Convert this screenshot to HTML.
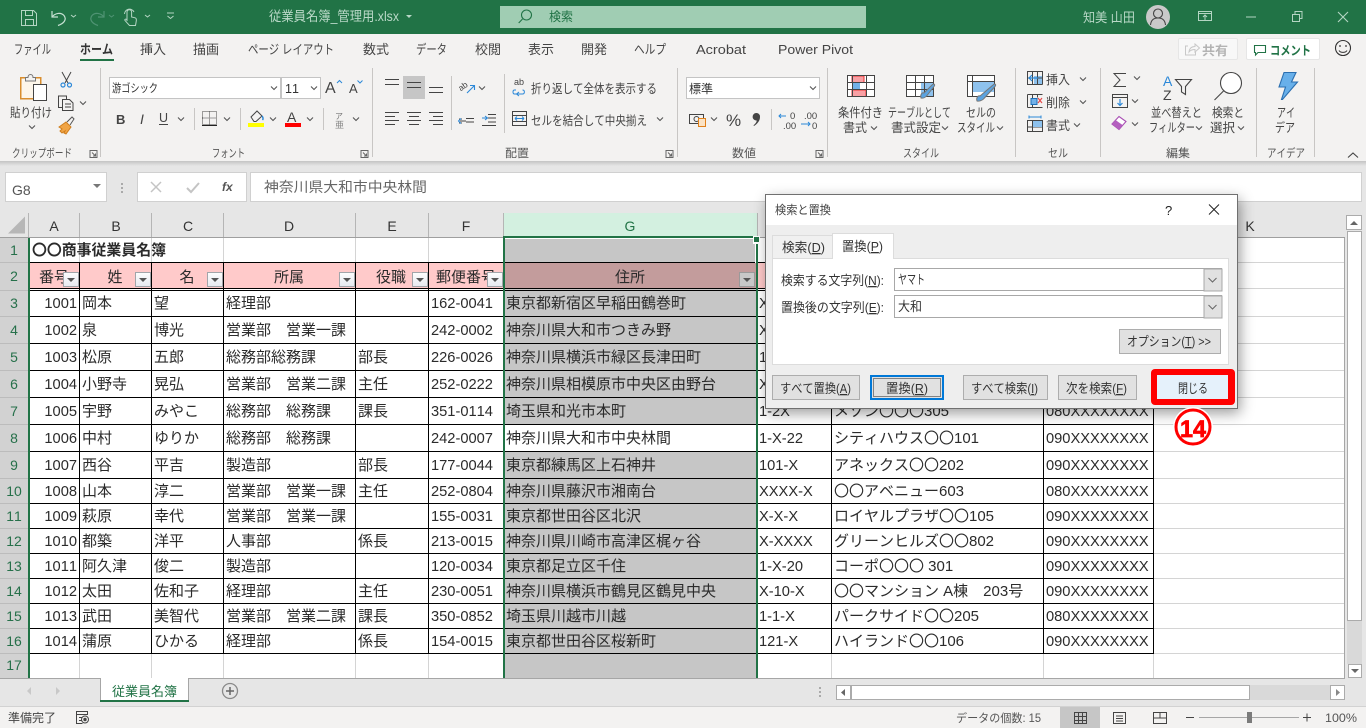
<!DOCTYPE html>
<html lang="ja"><head><meta charset="utf-8"><title>従業員名簿_管理用.xlsx - Excel</title>
<style>
html,body{margin:0;padding:0;width:1366px;height:728px;overflow:hidden;background:#e6e6e6}
svg{display:block;position:absolute;left:0;top:0}
text{font-family:"Liberation Sans","Noto Sans CJK JP",sans-serif;white-space:pre;font-kerning:none}
rect{shape-rendering:crispEdges}
rect.rr{shape-rendering:auto}
.t{font-size:12.5px;fill:#444}
.l{font-size:11.5px;fill:#555}
.tab{font-size:13px;fill:#444}
.c{font-size:15px;fill:#2b2b2b}
.p{font-size:14.67px;fill:#2b2b2b}
.e{text-anchor:end}
.m{text-anchor:middle}
.h{font-size:14px;fill:#333;text-anchor:middle}
.n{font-size:14px;fill:#26704a;text-anchor:middle}
.d{font-size:13px;fill:#333}
.i{fill:none;stroke:#444;stroke-width:1}
.w{fill:none;stroke:#b4d5c3;stroke-width:1}
.ch{fill:none;stroke:#555;stroke-width:1.1}
.s{fill:#c8c6c4}
</style></head><body>
<svg width="1366" height="728" viewBox="0 0 1366 728" xmlns="http://www.w3.org/2000/svg">
<defs>
<path id="v" d="M-3-1.5 0 1.5 3-1.5" class="ch"/>
<linearGradient id="sh" x1="0" y1="0" x2="0" y2="1"><stop offset="0" stop-color="#c4c4c4"/><stop offset="1" stop-color="#e6e6e6"/></linearGradient>
<linearGradient id="fb" x1="0" y1="0" x2="0" y2="1"><stop offset="0" stop-color="#fdfdfd"/><stop offset="1" stop-color="#e6e9ef"/></linearGradient>
<g id="fbtn"><rect x="0.5" y="0.5" width="15" height="14" fill="url(#fb)" stroke="#a2a5aa"/><path d="M4 6h8l-4 4z" fill="#555"/></g>
</defs>

<!-- title bar -->
<rect x="0" y="0" width="1366" height="34" fill="#217346"/>
<path class="w" d="M21.5 10.5h12l3 3v12h-15zM25.500 10.500v5h7v-5M25.500 25.500v-6h8v6"/>
<path d="M52 11v6h6M52 17c3-4 9-5 12-1.500 3 4 0 8-6 10" fill="none" stroke="#c6e0d2" stroke-width="1.200"/>
<path d="M71 15l2.500 2 2.500-2" class="w"/>
<path d="M104 11v6h-6M104 17c-3-4-9-5-12-1.500-3 4 0 8 6 10" fill="none" stroke="#4f9373" stroke-width="1.200"/>
<path d="M109 15l2.500 2 2.500-2" fill="none" stroke="#4f9373"/>
<path class="w" d="M127 21v-9a2.300 2.300 0 0 1 4.600 0v5l3.500.8c1.500.4 1.400 1.500 1.200 3l-.8 4.700h-6l-4.500-5c-.8-1.200.8-2 2-.5M124.500 14a5 5 0 0 1 9.500-2"/>
<path d="M145 15l2.500 2 2.500-2" class="w"/>
<path d="M167 13h7M167.500 16l3 2.500 3-2.500" class="w"/>
<text x="269" y="21" font-size="13.5" fill="#b9d8c7" textLength="130" lengthAdjust="spacingAndGlyphs">従業員名簿_管理用.xlsx</text>
<path d="M406 15h6l-3 3z" fill="#b9d8c7"/>
<rect x="500" y="6" width="366" height="22" fill="#a0cdb3"/>
<circle cx="526.500" cy="15" r="5" fill="none" stroke="#217346" stroke-width="1.100"/><path d="M522.500 19l-3.800 4" stroke="#217346" fill="none" stroke-width="1.100"/>
<text x="549" y="21" font-size="12.500" fill="#217346" textLength="24" lengthAdjust="spacingAndGlyphs">検索</text>
<text x="1083" y="22" font-size="13" fill="#b9d8c7" textLength="52" lengthAdjust="spacingAndGlyphs">知美 山田</text>
<circle cx="1158" cy="17" r="12" fill="#c9c9c9"/>
<circle cx="1158" cy="13.500" r="4.500" fill="none" stroke="#444" stroke-width="1.100"/><path d="M1150.500 25c.5-5.500 3.500-7 7.500-7s7 1.500 7.500 7" fill="none" stroke="#444" stroke-width="1.100"/>
<path class="w" d="M1198.500 11.500h13v9h-13zM1198.500 13.500h13M1205 20v-4.500M1203 17l2-2 2 2"/>
<path class="w" d="M1246 17h10"/>
<path class="w" d="M1292.500 14.500h7v7h-7zM1295 14v-2.500h7v7h-2.500"/>
<path class="w" d="M1338 12l10 10M1348 12l-10 10" style="stroke-width:1.100"/>

<!-- ribbon -->
<rect x="0" y="34" width="1366" height="127" fill="#f3f2f1"/>
<rect x="0" y="161" width="1366" height="5" fill="url(#sh)"/>
<text class="tab" x="14" y="54" textLength="37" lengthAdjust="spacingAndGlyphs">ファイル</text>
<text class="tab" x="80" y="54" textLength="33" lengthAdjust="spacingAndGlyphs" font-weight="700" style="fill:#333">ホーム</text>
<rect x="80" y="59" width="34" height="2" fill="#217346"/>
<text class="tab" x="140" y="54" textLength="26" lengthAdjust="spacingAndGlyphs">挿入</text>
<text class="tab" x="193" y="54" textLength="26" lengthAdjust="spacingAndGlyphs">描画</text>
<text class="tab" x="248" y="54" textLength="86" lengthAdjust="spacingAndGlyphs">ページ レイアウト</text>
<text class="tab" x="363" y="54" textLength="26" lengthAdjust="spacingAndGlyphs">数式</text>
<text class="tab" x="416" y="54" textLength="31" lengthAdjust="spacingAndGlyphs">データ</text>
<text class="tab" x="475" y="54" textLength="26" lengthAdjust="spacingAndGlyphs">校閲</text>
<text class="tab" x="528" y="54" textLength="26" lengthAdjust="spacingAndGlyphs">表示</text>
<text class="tab" x="581" y="54" textLength="26" lengthAdjust="spacingAndGlyphs">開発</text>
<text class="tab" x="634" y="54" textLength="32" lengthAdjust="spacingAndGlyphs">ヘルプ</text>
<text class="tab" x="696" y="54" textLength="50" lengthAdjust="spacingAndGlyphs">Acrobat</text>
<text class="tab" x="778" y="54" textLength="75" lengthAdjust="spacingAndGlyphs">Power Pivot</text>

<rect class="rr" x="1178.500" y="38.500" width="59" height="21" rx="1.500" fill="#f8f8f8" stroke="#e6e6e6"/>
<path d="M1188 46h-2.500v9h10v-3M1189 52c.5-4 3-5.500 6-5.500v-2.500l4.500 4-4.500 4v-2.500c-2.500 0-4.500.5-6 2.500z" fill="none" stroke="#c8c8c8"/>
<text x="1202" y="55" font-size="12.500" font-weight="700" fill="#b3b3b3" textLength="26" lengthAdjust="spacingAndGlyphs">共有</text>
<rect class="rr" x="1246.500" y="38.500" width="73" height="21" rx="1.500" fill="#fff" stroke="#e6e6e6"/>
<path d="M1254.500 45.500h11v7h-7.500l-2.500 2.500v-2.500h-1z" fill="none" stroke="#217346" stroke-width="1.100"/>
<text x="1270" y="55" font-size="12.500" font-weight="700" fill="#217346" textLength="41" lengthAdjust="spacingAndGlyphs">コメント</text>
<circle cx="1343" cy="48" r="7.500" fill="none" stroke="#333" stroke-width="1.100"/><circle cx="1340" cy="46" r=".9" fill="#333"/><circle cx="1346" cy="46" r=".9" fill="#333"/><path d="M1339 50.500c1.500 2.500 6.500 2.500 8 0" fill="none" stroke="#333"/>

<!-- group separators -->
<rect class="s" x="100" y="68" width="1" height="89"/><rect class="s" x="372" y="68" width="1" height="89"/><rect class="s" x="677" y="68" width="1" height="89"/><rect class="s" x="827" y="68" width="1" height="89"/><rect class="s" x="1015" y="68" width="1" height="89"/><rect class="s" x="1100" y="68" width="1" height="89"/><rect class="s" x="1256" y="68" width="1" height="89"/><rect class="s" x="1314" y="68" width="1" height="89"/>
<rect class="s" x="194" y="108" width="1" height="22"/><rect class="s" x="240" y="108" width="1" height="22"/><rect class="s" x="323" y="108" width="1" height="22"/>
<rect class="s" x="451" y="76" width="1" height="54"/><rect class="s" x="504" y="74" width="1" height="59"/><rect class="s" x="771" y="109" width="1" height="21"/>

<!-- clipboard group -->
<rect x="20.500" y="77.500" width="20" height="21" fill="#fdf6ea" stroke="#d98e2e" stroke-width="1.500"/>
<path d="M25.500 81v-3.500h2.500c0-4 5-4 5 0h2.500v3.500z" fill="#f3f2f1" stroke="#777"/>
<rect x="33.500" y="84.500" width="13" height="16" fill="#fff" stroke="#444"/>
<text class="t" x="10" y="117" textLength="42" lengthAdjust="spacingAndGlyphs">貼り付け</text>
<use href="#v" x="32" y="127"/>
<path d="M62 72l6 11M71 72l-6 11" fill="none" stroke="#444"/><circle cx="63" cy="85" r="2" fill="none" stroke="#2b88d8" stroke-width="1.200"/><circle cx="69.500" cy="85" r="2" fill="none" stroke="#2b88d8" stroke-width="1.200"/>
<path class="i" d="M62 107.500h-3.500v-11.500h8v3M62.500 99.500h7l3.500 3.500v7.500h-10.500zM65 104h6M65 107h6"/>
<use href="#v" x="83" y="103"/>
<path d="M59 127l7-5 5 5-5 7-2-1 1-2-3 2-2-2 2-2z" fill="#f0a445" stroke="#d07e1d"/><path d="M67 122l5-5 2 2-4 6" fill="none" stroke="#555"/>
<text class="l" x="12" y="157" textLength="60" lengthAdjust="spacingAndGlyphs">クリップボード</text>
<path d="M90 150.500h7v7h-7zM92 152.500l3.500 3.500M95.500 153.500v2.500h-2.500" fill="none" stroke="#666"/>

<!-- font group -->
<rect x="109.500" y="77.500" width="171" height="21" fill="#fff" stroke="#c4c4c4"/>
<rect x="281.500" y="77.500" width="39" height="21" fill="#fff" stroke="#c4c4c4"/>
<text x="112" y="92" font-size="11.500" fill="#333" textLength="46" lengthAdjust="spacingAndGlyphs">游ゴシック</text>
<use href="#v" x="274" y="88"/>
<text x="285" y="93" font-size="12.500" fill="#333">11</text>
<use href="#v" x="314" y="88"/>
<text x="325" y="93" font-size="16" fill="#444">A</text><path d="M337 83l2.500-2.500 2.500 2.500" fill="none" stroke="#2b88d8"/>
<text x="349" y="93" font-size="13" fill="#444">A</text><path d="M357.500 80.500l2.500 2.500 2.500-2.500" fill="none" stroke="#2b88d8"/>
<text x="116" y="124" font-size="13" font-weight="700" fill="#444">B</text>
<text x="140" y="124" font-size="14" font-style="italic" fill="#444" font-family="Liberation Serif">I</text>
<text x="159" y="122" font-size="12.500" fill="#444">U</text><rect x="159" y="124" width="9" height="1" fill="#444"/>
<use href="#v" x="181" y="119"/>
<path d="M202.500 111.500h14v13h-14zM209.500 111.500v13M202.500 118h14" fill="none" stroke="#444" stroke-dasharray="1 1"/><rect x="202" y="125" width="15" height="1" fill="#222"/>
<use href="#v" x="227" y="119"/>
<path d="M251 117l6-6 5 5-6 5.500h-2z" fill="none" stroke="#444"/><path d="M262 116c1 1 1.500 3 .5 4" fill="none" stroke="#2b88d8" stroke-width="1.500"/><rect x="248" y="123" width="16" height="4" fill="#ff0"/>
<use href="#v" x="273" y="119"/>
<text x="287" y="122" font-size="14" fill="#444">A</text><rect x="285" y="123" width="16" height="4" fill="#f00"/>
<use href="#v" x="310" y="119"/>
<text x="335" y="119" font-size="8" fill="#777">ア</text><text x="335" y="128" font-size="9" fill="#888">亜</text>
<use href="#v" x="356" y="119"/>
<text class="l" x="212" y="157" textLength="33" lengthAdjust="spacingAndGlyphs">フォント</text>
<path d="M361 150.500h7v7h-7zM363 152.500l3.500 3.500M366.500 153.500v2.500h-2.500" fill="none" stroke="#666"/>

<!-- align group -->
<rect x="403" y="76" width="22" height="23" fill="#c6c6c6"/>
<path class="i" d="M385 79.500h14M385 84.500h14M407 82.500h14M407 87.500h14M429 87.500h14M429 92.500h14M385 112.500h14M385 116.500h10M385 120.500h14M385 124.500h10M407 112.500h14M409 116.500h10M407 120.500h14M409 124.500h10M429 112.500h14M433 116.500h10M429 120.500h14M433 124.500h10"/>
<text x="459" y="90" font-size="8.500" fill="#444" transform="rotate(-35 462 88)">ab</text><path d="M467 93l7-7M470 85.500h4.500v4.500" fill="none" stroke="#2b88d8" stroke-width="1.100"/>
<use href="#v" x="482" y="88"/>
<path d="M466 118.500h8M466 122h8M459 119h3M459 123h3M460 121h6" fill="none" stroke="#444"/><path d="M461 118.500l-2.500 2.500 2.500 2.500" fill="none" stroke="#2b88d8"/>
<path d="M488 114.500h8M488 118h8M488 122h8M482 125.500h14" fill="none" stroke="#444"/><path d="M482 118h5M485 116l2.500 2-2.500 2" fill="none" stroke="#2b88d8"/>
<text x="514" y="85" font-size="9" fill="#444">ab</text><path d="M516 90h-1.500c-2 0-2 4 0 4h8c2.500 0 2.500-4 0-4M519 92l-2.500 2 2.500 2" fill="none" stroke="#2b88d8"/>
<text class="t" x="531" y="93" textLength="126" lengthAdjust="spacingAndGlyphs">折り返して全体を表示する</text>
<path d="M512.500 111.500h14v14h-14zM512.500 115.500h14M512.500 121.500h14" fill="none" stroke="#444"/><path d="M515 118.500h9M515 118.500l2-2M515 118.500l2 2M524 118.500l-2-2M524 118.500l-2 2" fill="none" stroke="#2b88d8"/>
<text class="t" x="531" y="125" textLength="116" lengthAdjust="spacingAndGlyphs">セルを結合して中央揃え</text>
<use href="#v" x="660" y="119"/>
<text class="l" x="505" y="157" textLength="24" lengthAdjust="spacingAndGlyphs">配置</text>
<path d="M666 150.500h7v7h-7zM668 152.500l3.500 3.500M671.500 153.500v2.500h-2.500" fill="none" stroke="#666"/>

<!-- number group -->
<rect x="686.500" y="77.500" width="133" height="21" fill="#fff" stroke="#c4c4c4"/>
<text x="689" y="93" font-size="12" fill="#333" textLength="24" lengthAdjust="spacingAndGlyphs">標準</text>
<use href="#v" x="813" y="88"/>
<path class="i" d="M689.500 114.500h14v9h-14z"/><circle cx="696.500" cy="119" r="2.500" class="i"/>
<rect x="698.500" y="118.500" width="7" height="8" fill="#fbe3c5" stroke="#e0801a"/>
<use href="#v" x="714" y="119"/>
<text x="726" y="126" font-size="17" fill="#444">%</text>
<path d="M756 113a3.600 3.600 0 0 1 4 4c0 4-3 7-6 9l-.5-.8c2-1.500 3.200-3 3.200-4.700a3.600 3.600 0 0 1-.7-7.500z" fill="#444"/>
<text x="790" y="119" font-size="9.500" fill="#444">0</text><text x="783" y="129" font-size="9.500" fill="#444">.00</text><path d="M786 116h-7M781 114l-2 2 2 2" fill="none" stroke="#2b88d8"/>
<text x="804" y="119" font-size="9.500" fill="#444">.00</text><text x="812" y="129" font-size="9.500" fill="#444">0</text><path d="M801 124h9M808 122l2 2-2 2" fill="none" stroke="#2b88d8"/>
<text class="l" x="732" y="157" textLength="24" lengthAdjust="spacingAndGlyphs">数値</text>
<path d="M816 150.500h7v7h-7zM818 152.500l3.500 3.500M821.500 153.500v2.500h-2.500" fill="none" stroke="#666"/>

<!-- styles -->
<rect x="848" y="75.500" width="27" height="21" fill="#fff"/>
<rect x="852" y="76" width="12" height="6.500" fill="#f8a0a4" stroke="#e33"/><rect x="852" y="83" width="8" height="6.500" fill="#72b1e8"/><rect x="852" y="90" width="14" height="6.500" fill="#f8a0a4" stroke="#e33"/>
<path class="i" d="M847.500 75.500h27v21h-27zM847.500 82.500h27M847.500 89.500h27M852.500 75.500v21M866.500 75.500v21"/>
<text class="t" x="838" y="117" textLength="45" lengthAdjust="spacingAndGlyphs">条件付き</text>
<text class="t" x="843" y="132" textLength="24" lengthAdjust="spacingAndGlyphs">書式</text><use href="#v" x="874" y="128"/>
<rect x="906" y="75.500" width="27" height="21" fill="#fff"/><rect x="921" y="82" width="12" height="14" fill="#8ec2ee"/>
<path class="i" d="M906.500 75.500h27v21h-27zM906.500 82.500h27M906.500 89.500h27M915.500 75.500v21M924.500 75.500v21"/>
<path d="M921 98c-1-3 1-6 3-5l8-8c2-2 3.500-.5 2 1.500l-7 9c-1.500 2-4 3-6 2.500z" fill="#5ba3e0" stroke="#777"/>
<text class="t" x="888" y="117" textLength="63" lengthAdjust="spacingAndGlyphs">テーブルとして</text>
<text class="t" x="891" y="132" textLength="50" lengthAdjust="spacingAndGlyphs">書式設定</text><use href="#v" x="945" y="128"/>
<rect x="967" y="75.500" width="27" height="21" fill="#fff"/><rect x="972" y="81" width="22" height="11" fill="#8ec2ee"/>
<path class="i" d="M967.500 75.500h27v21h-27zM967.500 81.500h27M972.500 75.500v21"/>
<path d="M977 101c-1-3 1-6 3-5l13-11c2-2 3.500-.5 2 1.500l-11 12c-1.500 2-5 3-7 2.500z" fill="#5ba3e0" stroke="#777"/>
<text class="t" x="966" y="117" textLength="30" lengthAdjust="spacingAndGlyphs">セルの</text>
<text class="t" x="957" y="132" textLength="38" lengthAdjust="spacingAndGlyphs">スタイル</text><use href="#v" x="1000" y="128"/>
<text class="l" x="903" y="157" textLength="36" lengthAdjust="spacingAndGlyphs">スタイル</text>

<!-- cells -->
<rect x="1034" y="76" width="9" height="8" fill="#8ec2ee"/>
<path class="i" d="M1027.500 71.500h15v13h-15zM1027.500 78h15M1032.500 71.500v13M1037.500 71.500v13" stroke-dasharray="2 0"/>
<path d="M1038 78h-9M1032 75l-3 3 3 3" fill="none" stroke="#2b88d8" stroke-width="1.200"/>
<text class="t" x="1046" y="84" textLength="24" lengthAdjust="spacingAndGlyphs">挿入</text><use href="#v" x="1083" y="79"/>
<path class="i" d="M1027.500 94.500h15M1027.500 107.500h15M1032.500 94.500v13M1037.500 94.500v3M1027.500 94.500v13"/>
<rect x="1031" y="98.500" width="6" height="6" fill="#72b1e8" stroke="#1e6fb8"/><path d="M1038 98l4 5M1042 98l-4 5" stroke="#e84a4a" fill="none" stroke-width="1.200"/>
<text class="t" x="1046" y="107" textLength="24" lengthAdjust="spacingAndGlyphs">削除</text><use href="#v" x="1083" y="102"/>
<path d="M1029 117h12M1029 115.500v3M1041 115.500v3" stroke="#2b88d8" fill="none"/>
<path class="i" d="M1027.500 120.500h15v11h-15zM1032.500 120.500v11M1027.500 127h15"/><rect x="1033" y="121" width="9" height="6" fill="#8ec2ee"/>
<text class="t" x="1046" y="130" textLength="24" lengthAdjust="spacingAndGlyphs">書式</text><use href="#v" x="1077" y="125"/>
<text class="l" x="1048" y="157" textLength="20" lengthAdjust="spacingAndGlyphs">セル</text>

<!-- editing -->
<path d="M1126 73.500h-12l6 6.500-6 6.500h12" fill="none" stroke="#444"/><use href="#v" x="1137" y="78"/>
<path class="i" d="M1112.500 94.500h15v13h-15zM1112.500 97.500h15"/><path d="M1120 99v6M1117.500 103l2.500 2.500 2.500-2.500" fill="none" stroke="#2b88d8" stroke-width="1.200"/><use href="#v" x="1135" y="101"/>
<path d="M1112 124l7-7.500 7 5-7 8z" fill="#fff" stroke="#a94fb4" stroke-width="1.100"/><path d="M1112 124l3.500-4 7 5-3.500 4.500z" fill="#b45fbf"/><use href="#v" x="1135" y="124"/>
<text x="1163" y="86" font-size="14" fill="#2b88d8">A</text><text x="1163" y="100" font-size="14" fill="#444">Z</text>
<path d="M1175.500 79.500h16l-6 7v8l-4-2.500v-5.500z" fill="none" stroke="#444" stroke-width="1.100"/>
<text class="t" x="1151" y="117" textLength="51" lengthAdjust="spacingAndGlyphs">並べ替えと</text>
<text class="t" x="1149" y="132" textLength="46" lengthAdjust="spacingAndGlyphs">フィルター</text><use href="#v" x="1199" y="128"/>
<circle cx="1231" cy="83" r="10.500" fill="#fff" stroke="#444" stroke-width="1.100"/><path d="M1223.500 91l-9 9" stroke="#444" fill="none" stroke-width="1.100"/>
<text class="t" x="1212" y="117" textLength="32" lengthAdjust="spacingAndGlyphs">検索と</text>
<text class="t" x="1210" y="132" textLength="25" lengthAdjust="spacingAndGlyphs">選択</text><use href="#v" x="1241" y="128"/>
<text class="l" x="1166" y="157" textLength="24" lengthAdjust="spacingAndGlyphs">編集</text>

<!-- ideas -->
<path d="M1284 72.500h12l-4.500 9.500h6l-15 17.500-1 0 4-12.500h-6.500z" fill="#68b0ea" stroke="#2b6fb0" stroke-width="1.100"/>
<text class="t" x="1277" y="117" textLength="18" lengthAdjust="spacingAndGlyphs">アイ</text>
<text class="t" x="1275" y="132" textLength="20" lengthAdjust="spacingAndGlyphs">デア</text>
<text class="l" x="1267" y="157" textLength="38" lengthAdjust="spacingAndGlyphs">アイデア</text>
<path d="M1348 157.500l5-4.500 5 4.500" fill="none" stroke="#444" stroke-width="1.100"/>

<!-- formula bar -->
<rect x="5.500" y="172.500" width="101" height="29" fill="#fff" stroke="#d0d0d0"/>
<text x="12" y="195" font-size="14" fill="#555">G8</text>
<path d="M93 184h8l-4 4z" fill="#777"/>
<rect x="121" y="183" width="2" height="2" fill="#aaa"/><rect x="121" y="187" width="2" height="2" fill="#aaa"/><rect x="121" y="191" width="2" height="2" fill="#aaa"/>
<rect x="137.500" y="172.500" width="109" height="29" fill="#fff" stroke="#d0d0d0"/>
<path d="M151 182l10 10M161 182l-10 10" stroke="#c4c4c4" stroke-width="1.500" fill="none"/>
<path d="M187 188l4 4 8-9" stroke="#c4c4c4" stroke-width="2" fill="none"/>
<text x="222" y="191" font-size="12" font-style="italic" font-weight="700" fill="#555" font-family="Liberation Serif">fx</text>
<rect x="250.500" y="172.500" width="1111" height="29" fill="#fff" stroke="#d0d0d0"/>
<text x="264" y="192" font-size="14" fill="#666" textLength="163" lengthAdjust="spacingAndGlyphs">神奈川県大和市中央林間</text>

<!-- column headers -->
<rect x="0" y="213" width="1346" height="25" fill="#e6e6e6"/>
<path d="M8 233.500h17v-17z" fill="#b7b7b7"/>
<rect x="503" y="213" width="254" height="24" fill="#d3f0e0"/>
<rect x="28" y="213" width="1" height="24" fill="#b5b5b5"/><rect x="79" y="213" width="1" height="24" fill="#b5b5b5"/><rect x="151" y="213" width="1" height="24" fill="#b5b5b5"/><rect x="223" y="213" width="1" height="24" fill="#b5b5b5"/><rect x="355" y="213" width="1" height="24" fill="#b5b5b5"/><rect x="428" y="213" width="1" height="24" fill="#b5b5b5"/><rect x="503" y="213" width="1" height="24" fill="#b5b5b5"/><rect x="757" y="213" width="1" height="24" fill="#b5b5b5"/>
<rect x="0" y="237" width="1345" height="1" fill="#9f9f9f"/>
<text class="h" x="54" y="231">A</text><text class="h" x="116" y="231">B</text><text class="h" x="188" y="231">C</text><text class="h" x="289" y="231">D</text><text class="h" x="392" y="231">E</text><text class="h" x="466" y="231">F</text><text class="h" x="630" y="231" style="fill:#217346">G</text><text class="h" x="1250" y="231">K</text>

<!-- row headers -->
<rect x="0" y="238" width="28" height="440" fill="#d2d2d2"/>
<rect x="0" y="262" width="28" height="1" fill="#bcbcbc"/><rect x="0" y="290" width="28" height="1" fill="#bcbcbc"/><rect x="0" y="316" width="28" height="1" fill="#bcbcbc"/><rect x="0" y="343" width="28" height="1" fill="#bcbcbc"/><rect x="0" y="370" width="28" height="1" fill="#bcbcbc"/><rect x="0" y="397" width="28" height="1" fill="#bcbcbc"/><rect x="0" y="424" width="28" height="1" fill="#bcbcbc"/><rect x="0" y="451" width="28" height="1" fill="#bcbcbc"/><rect x="0" y="478" width="28" height="1" fill="#bcbcbc"/><rect x="0" y="503" width="28" height="1" fill="#bcbcbc"/><rect x="0" y="528" width="28" height="1" fill="#bcbcbc"/><rect x="0" y="553" width="28" height="1" fill="#bcbcbc"/><rect x="0" y="578" width="28" height="1" fill="#bcbcbc"/><rect x="0" y="603" width="28" height="1" fill="#bcbcbc"/><rect x="0" y="628" width="28" height="1" fill="#bcbcbc"/><rect x="0" y="653" width="28" height="1" fill="#bcbcbc"/>
<text class="n" x="14" y="255">1</text><text class="n" x="14" y="281">2</text><text class="n" x="14" y="308">3</text><text class="n" x="14" y="335">4</text><text class="n" x="14" y="362">5</text><text class="n" x="14" y="389">6</text><text class="n" x="14" y="416">7</text><text class="n" x="14" y="443">8</text><text class="n" x="14" y="470">9</text><text class="n" x="14" y="496">10</text><text class="n" x="14" y="521">11</text><text class="n" x="14" y="546">12</text><text class="n" x="14" y="571">13</text><text class="n" x="14" y="596">14</text><text class="n" x="14" y="621">15</text><text class="n" x="14" y="646">16</text><text class="n" x="14" y="670">17</text>

<!-- sheet -->
<rect x="29" y="238" width="1316" height="440" fill="#fff"/>
<rect x="1344" y="238" width="1" height="440" fill="#a6a6a6"/>
<rect x="29" y="263" width="1124" height="26" fill="#ffcaca"/>
<rect x="505" y="238" width="251" height="440" fill="#c6c6c6"/>
<rect x="505" y="263" width="251" height="26" fill="#c39c9c"/>
<rect x="505" y="425" width="251" height="26" fill="#fff"/>

<!-- light grid -->
<g fill="#d4d4d4">
<rect x="79" y="238" width="1" height="25"/><rect x="151" y="238" width="1" height="25"/><rect x="223" y="238" width="1" height="25"/><rect x="355" y="238" width="1" height="25"/><rect x="428" y="238" width="1" height="25"/><rect x="757" y="238" width="1" height="25"/><rect x="831" y="238" width="1" height="25"/>
<rect x="79" y="654" width="1" height="24"/><rect x="151" y="654" width="1" height="24"/><rect x="223" y="654" width="1" height="24"/><rect x="355" y="654" width="1" height="24"/><rect x="428" y="654" width="1" height="24"/><rect x="831" y="654" width="1" height="24"/><rect x="1043" y="654" width="1" height="24"/><rect x="1153" y="238" width="1" height="440"/>
<rect x="1154" y="262" width="190" height="1"/><rect x="1154" y="288" width="190" height="1"/><rect x="1154" y="316" width="190" height="1"/><rect x="1154" y="343" width="190" height="1"/><rect x="1154" y="370" width="190" height="1"/><rect x="1154" y="397" width="190" height="1"/><rect x="1154" y="424" width="190" height="1"/><rect x="1154" y="451" width="190" height="1"/><rect x="1154" y="478" width="190" height="1"/><rect x="1154" y="503" width="190" height="1"/><rect x="1154" y="528" width="190" height="1"/><rect x="1154" y="553" width="190" height="1"/><rect x="1154" y="578" width="190" height="1"/><rect x="1154" y="603" width="190" height="1"/><rect x="1154" y="628" width="190" height="1"/><rect x="1154" y="653" width="190" height="1"/>
</g>

<!-- black grid -->
<g fill="#000">
<rect x="29" y="262" width="1125" height="1"/><rect x="29" y="288" width="1125" height="1"/><rect x="29" y="290" width="1125" height="1"/><rect x="29" y="316" width="1125" height="1"/><rect x="29" y="343" width="1125" height="1"/><rect x="29" y="370" width="1125" height="1"/><rect x="29" y="397" width="1125" height="1"/><rect x="29" y="424" width="1125" height="1"/><rect x="29" y="451" width="1125" height="1"/><rect x="29" y="478" width="1125" height="1"/><rect x="29" y="503" width="1125" height="1"/><rect x="29" y="528" width="1125" height="1"/><rect x="29" y="553" width="1125" height="1"/><rect x="29" y="578" width="1125" height="1"/><rect x="29" y="603" width="1125" height="1"/><rect x="29" y="628" width="1125" height="1"/><rect x="29" y="653" width="1125" height="1"/>
<rect x="79" y="262" width="1" height="392"/><rect x="151" y="262" width="1" height="392"/><rect x="223" y="262" width="1" height="392"/><rect x="355" y="262" width="1" height="392"/><rect x="428" y="262" width="1" height="392"/><rect x="757" y="262" width="1" height="392" fill="#217346"/><rect x="831" y="262" width="1" height="392"/><rect x="1043" y="262" width="1" height="392"/><rect x="1153" y="262" width="1" height="392"/>
</g>

<!-- cell text -->
<text class="c" x="32" y="255" font-weight="700" textLength="134" lengthAdjust="spacingAndGlyphs">〇〇商事従業員名簿</text>
<text class="c m" x="54" y="282" textLength="30" lengthAdjust="spacing">番号</text><text class="c m" x="115" y="282">姓</text><text class="c m" x="187" y="282">名</text><text class="c m" x="289" y="282">所属</text><text class="c m" x="391" y="282">役職</text><text class="c m" x="466" y="282" textLength="60" lengthAdjust="spacing">郵便番号</text><text class="c m" x="630" y="282">住所</text>
<use href="#fbtn" x="63" y="272"/><use href="#fbtn" x="135" y="272"/><use href="#fbtn" x="207" y="272"/><use href="#fbtn" x="339" y="272"/><use href="#fbtn" x="412" y="272"/><use href="#fbtn" x="487" y="272"/>
<g transform="translate(739 272)"><rect x="0.500" y="0.500" width="15" height="14" fill="#c8c8c8" stroke="#9a9a9a"/><path d="M4 6h8l-4 4z" fill="#555"/></g>

<g class="row">
<text class="p e" x="77" y="308">1001</text><text class="c" x="82" y="308">岡本</text><text class="c" x="154" y="308">望</text><text class="c" x="226" y="308">経理部</text><text class="p" x="431" y="308">162-0041</text><text class="c" x="506" y="308">東京都新宿区早稲田鶴巻町</text><text class="p" x="759" y="308">X</text>
<text class="p e" x="77" y="335">1002</text><text class="c" x="82" y="335">泉</text><text class="c" x="154" y="335">博光</text><text class="c" x="226" y="335">営業部　営業一課</text><text class="p" x="431" y="335">242-0002</text><text class="c" x="506" y="335">神奈川県大和市つきみ野</text><text class="p" x="759" y="335">X</text>
<text class="p e" x="77" y="362">1003</text><text class="c" x="82" y="362">松原</text><text class="c" x="154" y="362">五郎</text><text class="c" x="226" y="362">総務部総務課</text><text class="c" x="358" y="362">部長</text><text class="p" x="431" y="362">226-0026</text><text class="c" x="506" y="362">神奈川県横浜市緑区長津田町</text><text class="p" x="759" y="362">1</text>
<text class="p e" x="77" y="389">1004</text><text class="c" x="82" y="389">小野寺</text><text class="c" x="154" y="389">晃弘</text><text class="c" x="226" y="389">営業部　営業二課</text><text class="c" x="358" y="389">主任</text><text class="p" x="431" y="389">252-0222</text><text class="c" x="506" y="389">神奈川県相模原市中央区由野台</text><text class="p" x="759" y="389">X</text>
<text class="p e" x="77" y="416">1005</text><text class="c" x="82" y="416">宇野</text><text class="c" x="154" y="416">みやこ</text><text class="c" x="226" y="416">総務部　総務課</text><text class="c" x="358" y="416">課長</text><text class="p" x="431" y="416">351-0114</text><text class="c" x="506" y="416">埼玉県和光市本町</text><text class="p" x="759" y="416">1-2X</text><text class="c" x="834" y="416">メゾン〇〇〇305</text><text class="p" x="1046" y="416">080XXXXXXXX</text>
<text class="p e" x="77" y="443">1006</text><text class="c" x="82" y="443">中村</text><text class="c" x="154" y="443">ゆりか</text><text class="c" x="226" y="443">総務部　総務課</text><text class="p" x="431" y="443">242-0007</text><text class="c" x="506" y="443">神奈川県大和市中央林間</text><text class="p" x="759" y="443">1-X-22</text><text class="c" x="834" y="443">シティハウス〇〇101</text><text class="p" x="1046" y="443">090XXXXXXXX</text>
<text class="p e" x="77" y="470">1007</text><text class="c" x="82" y="470">西谷</text><text class="c" x="154" y="470">平吉</text><text class="c" x="226" y="470">製造部</text><text class="c" x="358" y="470">部長</text><text class="p" x="431" y="470">177-0044</text><text class="c" x="506" y="470">東京都練馬区上石神井</text><text class="p" x="759" y="470">101-X</text><text class="c" x="834" y="470">アネックス〇〇202</text><text class="p" x="1046" y="470">090XXXXXXXX</text>
<text class="p e" x="77" y="496">1008</text><text class="c" x="82" y="496">山本</text><text class="c" x="154" y="496">淳二</text><text class="c" x="226" y="496">営業部　営業一課</text><text class="c" x="358" y="496">主任</text><text class="p" x="431" y="496">252-0804</text><text class="c" x="506" y="496">神奈川県藤沢市湘南台</text><text class="p" x="759" y="496">XXXX-X</text><text class="c" x="834" y="496">〇〇アベニュー603</text><text class="p" x="1046" y="496">080XXXXXXXX</text>
<text class="p e" x="77" y="521">1009</text><text class="c" x="82" y="521">萩原</text><text class="c" x="154" y="521">幸代</text><text class="c" x="226" y="521">営業部　営業一課</text><text class="p" x="431" y="521">155-0031</text><text class="c" x="506" y="521">東京都世田谷区北沢</text><text class="p" x="759" y="521">X-X-X</text><text class="c" x="834" y="521">ロイヤルプラザ〇〇105</text><text class="p" x="1046" y="521">090XXXXXXXX</text>
<text class="p e" x="77" y="546">1010</text><text class="c" x="82" y="546">都築</text><text class="c" x="154" y="546">洋平</text><text class="c" x="226" y="546">人事部</text><text class="c" x="358" y="546">係長</text><text class="p" x="431" y="546">213-0015</text><text class="c" x="506" y="546">神奈川県川崎市高津区梶ヶ谷</text><text class="p" x="759" y="546">X-XXXX</text><text class="c" x="834" y="546">グリーンヒルズ〇〇802</text><text class="p" x="1046" y="546">090XXXXXXXX</text>
<text class="p e" x="77" y="571">1011</text><text class="c" x="82" y="571">阿久津</text><text class="c" x="154" y="571">俊二</text><text class="c" x="226" y="571">製造部</text><text class="p" x="431" y="571">120-0034</text><text class="c" x="506" y="571">東京都足立区千住</text><text class="p" x="759" y="571">1-X-20</text><text class="c" x="834" y="571">コーポ〇〇〇 301</text><text class="p" x="1046" y="571">090XXXXXXXX</text>
<text class="p e" x="77" y="596">1012</text><text class="c" x="82" y="596">太田</text><text class="c" x="154" y="596">佐和子</text><text class="c" x="226" y="596">経理部</text><text class="c" x="358" y="596">主任</text><text class="p" x="431" y="596">230-0051</text><text class="c" x="506" y="596">神奈川県横浜市鶴見区鶴見中央</text><text class="p" x="759" y="596">X-10-X</text><text class="c" x="834" y="596">〇〇マンション A棟　203号</text><text class="p" x="1046" y="596">090XXXXXXXX</text>
<text class="p e" x="77" y="621">1013</text><text class="c" x="82" y="621">武田</text><text class="c" x="154" y="621">美智代</text><text class="c" x="226" y="621">営業部　営業二課</text><text class="c" x="358" y="621">課長</text><text class="p" x="431" y="621">350-0852</text><text class="c" x="506" y="621">埼玉県川越市川越</text><text class="p" x="759" y="621">1-1-X</text><text class="c" x="834" y="621">パークサイド〇〇205</text><text class="p" x="1046" y="621">080XXXXXXXX</text>
<text class="p e" x="77" y="646">1014</text><text class="c" x="82" y="646">蒲原</text><text class="c" x="154" y="646">ひかる</text><text class="c" x="226" y="646">経理部</text><text class="c" x="358" y="646">係長</text><text class="p" x="431" y="646">154-0015</text><text class="c" x="506" y="646">東京都世田谷区桜新町</text><text class="p" x="759" y="646">121-X</text><text class="c" x="834" y="646">ハイランド〇〇106</text><text class="p" x="1046" y="646">090XXXXXXXX</text>
</g>

<!-- selection -->
<rect x="28" y="238" width="2" height="440" fill="#217346"/>
<rect x="505" y="238" width="251" height="1" fill="#fff"/><rect x="755" y="238" width="1" height="25" fill="#fff"/>
<rect x="503" y="236" width="255" height="2" fill="#217346"/>
<rect x="503" y="236" width="2" height="442" fill="#217346"/>
<rect x="756" y="236" width="2" height="442" fill="#217346"/>
<rect x="753" y="236" width="7" height="8" fill="#fff"/><rect x="754" y="237" width="5" height="5" fill="#217346"/>

<!-- vertical scroll -->
<rect x="1345" y="213" width="21" height="465" fill="#e6e6e6"/>
<rect x="1347" y="231" width="15" height="433" fill="#d9d9d9"/>
<rect x="1347.500" y="231.500" width="14" height="389" fill="#fff" stroke="#ababab"/>
<rect x="1346.500" y="215.500" width="15" height="14" fill="#fff" stroke="#ababab"/><path d="M1350 225h8l-4-4z" fill="#666"/>
<rect x="1348.500" y="664.500" width="13" height="13" fill="#fff" stroke="#ababab"/><path d="M1351 669h8l-4 4z" fill="#666"/>

<!-- sheet tabs -->
<rect x="0" y="678" width="1366" height="28" fill="#e6e6e6"/>
<rect x="0" y="678" width="1345" height="1" fill="#a6a6a6"/>
<path d="M31 687v8l-4-4zM56 687v8l4-4z" fill="#c8c8c8"/>
<rect x="100" y="678" width="89" height="24" fill="#fff"/>
<rect x="100" y="678" width="1" height="24" fill="#a6a6a6"/><rect x="188" y="678" width="1" height="24" fill="#a6a6a6"/>
<rect x="100" y="700" width="89" height="2" fill="#217346"/>
<text x="112" y="696" font-size="13" fill="#217346" textLength="65" lengthAdjust="spacingAndGlyphs">従業員名簿</text>
<circle cx="230" cy="691" r="7.500" fill="none" stroke="#8a8a8a" stroke-width="1.300"/><path d="M226 691h8M230 687v8" stroke="#666" stroke-width="1.500" fill="none"/>
<rect x="819" y="687" width="2" height="2" fill="#aaa"/><rect x="819" y="691" width="2" height="2" fill="#aaa"/><rect x="819" y="695" width="2" height="2" fill="#aaa"/>
<rect x="836.500" y="685.500" width="14" height="14" fill="#fff" stroke="#ababab"/><path d="M845 689v7l-4-3.500z" fill="#666"/>
<rect x="851.500" y="685.500" width="398" height="14" fill="#fff" stroke="#ababab"/>
<rect x="1250" y="685" width="80" height="15" fill="#d9d9d9"/>
<rect x="1330.500" y="685.500" width="14" height="14" fill="#fff" stroke="#ababab"/><path d="M1336 689v7l4-3.500z" fill="#888"/>

<!-- status bar -->
<rect x="0" y="706" width="1366" height="22" fill="#f3f2f1"/>
<rect x="0" y="706" width="1366" height="1" fill="#d2d2d2"/>
<text x="8" y="722" font-size="12" fill="#444" textLength="48" lengthAdjust="spacingAndGlyphs">準備完了</text>
<path class="i" d="M76.500 711.500h11v3h-11zM76.500 714.500v9h6M79 717.500h3M79 720.500h3"/><circle cx="85" cy="719.500" r="3.500" class="i"/><circle cx="85" cy="719.500" r="1.700" fill="#444"/>
<text x="956" y="722" font-size="11.500" fill="#555" textLength="85" lengthAdjust="spacingAndGlyphs">データの個数: 15</text>
<rect x="1060" y="707" width="40" height="21" fill="#c6c6c6"/>
<path class="i" d="M1074.500 712.500h12v11h-12zM1078.500 712.500v11M1082.500 712.500v11M1074.500 716.500h12M1074.500 720.500h12"/>
<path class="i" d="M1113.500 712.500h12v11h-12zM1116 716h7M1116 718.500h7M1116 721h7"/>
<path class="i" d="M1153.500 712.500h13v11h-13zM1160 712.500v5.500M1153.500 718h13"/>
<rect x="1186" y="717" width="8" height="1" fill="#444"/>
<rect x="1199" y="717" width="100" height="1" fill="#a6a6a6"/>
<rect x="1247" y="712" width="5" height="11" fill="#7b7b7b"/>
<path d="M1303 717.500h8M1307 713.500v8" stroke="#444" fill="none"/>
<text x="1325" y="722" font-size="12" fill="#555" textLength="32" lengthAdjust="spacingAndGlyphs">100%</text>

<!-- dialog -->
<rect x="765" y="195" width="472" height="214" fill="#fff" style="filter:drop-shadow(3px 4px 7px rgba(0,0,0,.4))"/>
<rect x="765" y="225" width="472" height="184" fill="#eeeeee"/>
<rect x="765.500" y="194.500" width="472" height="214" fill="none" stroke="#707070"/>
<text x="775" y="214" font-size="12" fill="#444" textLength="56" lengthAdjust="spacingAndGlyphs">検索と置換</text>
<text x="1165" y="215" font-size="13" fill="#222">?</text>
<path d="M1209 204.500l10 10M1219 204.500l-10 10" stroke="#222" fill="none"/>
<rect x="772.500" y="258.500" width="456" height="106" fill="#fff" stroke="#dcdcdc"/>
<rect x="772.500" y="235.500" width="60" height="23" fill="#f0f0f0" stroke="#dcdcdc"/>
<rect x="832.500" y="233.500" width="61" height="25" fill="#fff" stroke="#dcdcdc"/>
<rect x="833" y="256" width="60" height="4" fill="#fff"/>
<text class="d" x="782" y="252" textLength="43" lengthAdjust="spacingAndGlyphs">検索(<tspan text-decoration="underline">D</tspan>)</text>
<text class="d" x="842" y="251" textLength="41" lengthAdjust="spacingAndGlyphs">置換(<tspan text-decoration="underline">P</tspan>)</text>
<text class="d" x="781" y="285" textLength="103" lengthAdjust="spacingAndGlyphs">検索する文字列(<tspan text-decoration="underline">N</tspan>):</text>
<text class="d" x="781" y="312" textLength="103" lengthAdjust="spacingAndGlyphs">置換後の文字列(<tspan text-decoration="underline">E</tspan>):</text>
<rect x="894.500" y="268.500" width="327" height="22" fill="#fff" stroke="#a8a8a8"/>
<rect x="1204" y="269" width="18" height="22" fill="#e1e1e1" stroke="#a8a8a8"/>
<path d="M1208.500 278l4 4 4-4" fill="none" stroke="#666"/>
<rect x="894.500" y="295.500" width="327" height="22" fill="#fff" stroke="#a8a8a8"/>
<rect x="1204" y="296" width="18" height="22" fill="#e1e1e1" stroke="#a8a8a8"/>
<path d="M1208.500 305l4 4 4-4" fill="none" stroke="#666"/>
<text class="d" x="898" y="284" textLength="27" lengthAdjust="spacingAndGlyphs">ヤマト</text>
<text class="d" x="898" y="311" textLength="24" lengthAdjust="spacingAndGlyphs">大和</text>
<rect x="1119.500" y="329.500" width="101" height="24" fill="#e1e1e1" stroke="#adadad"/>
<text class="d" x="1127" y="346" textLength="84" lengthAdjust="spacingAndGlyphs">オプション(<tspan text-decoration="underline">T</tspan>) &gt;&gt;</text>

<rect x="772.500" y="375.500" width="87" height="24" fill="#e1e1e1" stroke="#adadad"/>
<text class="d" x="780" y="393" textLength="71" lengthAdjust="spacingAndGlyphs">すべて置換(<tspan text-decoration="underline">A</tspan>)</text>
<rect x="871" y="376" width="72" height="23" fill="#e1e1e1" stroke="#0078d7" stroke-width="2"/>
<rect x="873.500" y="378.500" width="67" height="18" fill="none" stroke="#222" stroke-dasharray="1 1"/>
<text class="d" x="886" y="393" textLength="42" lengthAdjust="spacingAndGlyphs">置換(<tspan text-decoration="underline">R</tspan>)</text>
<rect x="963.500" y="375.500" width="84" height="24" fill="#e1e1e1" stroke="#adadad"/>
<text class="d" x="971" y="393" textLength="67" lengthAdjust="spacingAndGlyphs">すべて検索(<tspan text-decoration="underline">I</tspan>)</text>
<rect x="1058.500" y="375.500" width="78" height="24" fill="#e1e1e1" stroke="#adadad"/>
<text class="d" x="1066" y="393" textLength="61" lengthAdjust="spacingAndGlyphs">次を検索(<tspan text-decoration="underline">F</tspan>)</text>
<rect class="rr" x="1151" y="369" width="84" height="36" rx="4" fill="#f00"/>
<rect x="1157" y="375" width="71" height="24" fill="#e5f1fb"/>
<text class="d" x="1178" y="393" textLength="30" lengthAdjust="spacingAndGlyphs">閉じる</text>

<!-- callout -->
<circle cx="1193" cy="427" r="20" fill="#fff"/>
<circle cx="1193" cy="427" r="17" fill="#fff" stroke="#f00" stroke-width="3"/>
<text x="1193" y="437" font-size="24" font-weight="700" fill="#f00" stroke="#f00" stroke-width=".7" text-anchor="middle" textLength="26" lengthAdjust="spacingAndGlyphs">14</text>
</svg>
</body></html>
